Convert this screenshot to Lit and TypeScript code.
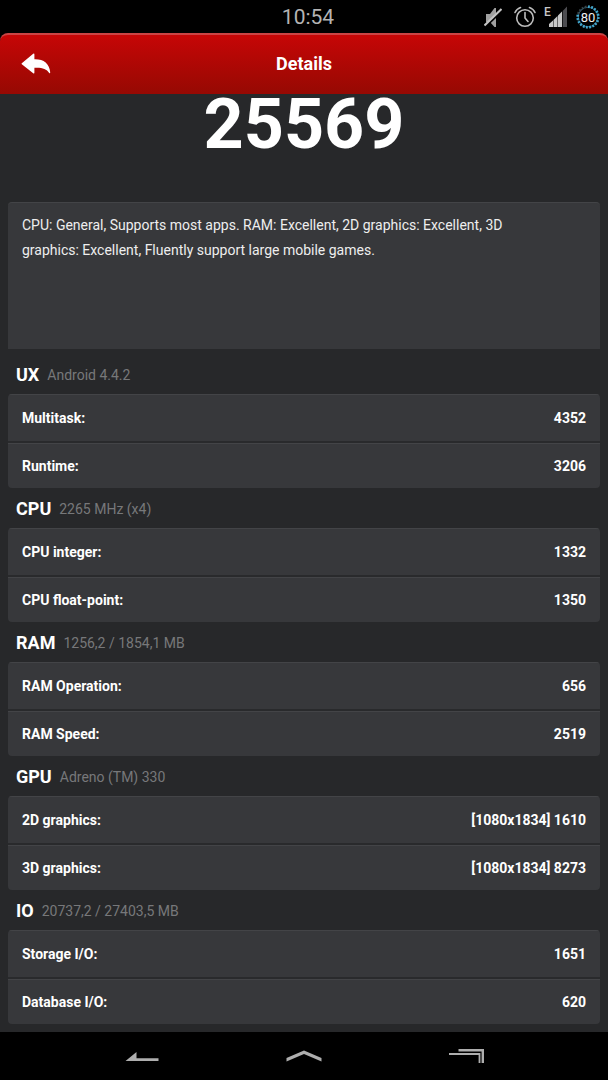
import { LitElement, html, css, svg } from "lit";
import { customElement, property } from "lit/decorators.js";

interface Row {
  label: string;
  value: string;
}

interface Group {
  name: string;
  info: string;
  rows: Row[];
}

const GROUPS: Group[] = [
  {
    name: "UX",
    info: "Android 4.4.2",
    rows: [
      { label: "Multitask:", value: "4352" },
      { label: "Runtime:", value: "3206" },
    ],
  },
  {
    name: "CPU",
    info: "2265 MHz (x4)",
    rows: [
      { label: "CPU integer:", value: "1332" },
      { label: "CPU float-point:", value: "1350" },
    ],
  },
  {
    name: "RAM",
    info: "1256,2 / 1854,1 MB",
    rows: [
      { label: "RAM Operation:", value: "656" },
      { label: "RAM Speed:", value: "2519" },
    ],
  },
  {
    name: "GPU",
    info: "Adreno (TM) 330",
    rows: [
      { label: "2D graphics:", value: "[1080x1834] 1610" },
      { label: "3D graphics:", value: "[1080x1834] 8273" },
    ],
  },
  {
    name: "IO",
    info: "20737,2 / 27403,5 MB",
    rows: [
      { label: "Storage I/O:", value: "1651" },
      { label: "Database I/O:", value: "620" },
    ],
  },
];

@customElement("status-bar")
export class StatusBar extends LitElement {
  static styles = css`
    :host {
      display: block;
      background: #000;
    }
    .bar {
      display: grid;
      grid-template-columns: 1fr auto 1fr;
      align-items: center;
      height: 33px;
      padding: 0 8px;
    }
    .time {
      grid-column: 2;
      padding: 2px 0 0 8px;
      font-size: 21px;
      line-height: 31px;
      color: #b4b4b4;
    }
    .icons {
      display: flex;
      justify-content: flex-end;
      align-items: center;
      gap: 8px;
    }
    svg {
      display: block;
    }
    .mute {
      margin-right: 4px;
    }
    .network {
      font: 500 12px Roboto, sans-serif;
      fill: #c8c8c8;
    }
    .charge {
      font: 400 13px Roboto, sans-serif;
      fill: #f0f0f0;
    }
  `;

  render() {
    return html`
      <div class="bar">
        <time class="time">10:54</time>
        <div class="icons">
          <svg class="mute" width="18" height="24" viewBox="0 0 18 24" role="img" aria-label="Muted">
            <path d="M2 9h4l4.500-6H12v19h-1.500L6 17H2z" fill="#a0a0a0" />
            <path d="M1 22L18 5.500" stroke="#000" stroke-width="2.400" />
            <path d="M.5 20.500L17.500 4" stroke="#c4c4c4" stroke-width="2" />
          </svg>
          <svg width="22" height="24" viewBox="0 0 22 24" role="img" aria-label="Alarm">
            <g fill="none" stroke="#bcbcbc" stroke-width="1.600" stroke-linecap="round">
              <circle cx="11" cy="13" r="8.300" />
              <path d="M11 7.500V13l3 3.500M1 7.500Q2.500 4 6.500 2.500M21 7.500Q19.500 4 15.500 2.500" />
            </g>
          </svg>
          <svg width="24" height="24" viewBox="0 0 24 24" role="img" aria-label="Edge network">
            <text class="network" x="0" y="11">E</text>
            <path d="M5 19L9 15.500V22H5zM9.500 15L13.500 11V22H9.500zM14 10.500L18 6.500V22H14z" fill="#c8c8c8" />
            <path d="M18.700 6L23 1.500V22H18.700z" fill="#4c4c50" />
          </svg>
          <svg width="24" height="24" viewBox="0 0 24 24" role="img" aria-label="Battery 80 percent">
            <circle cx="12" cy="12" r="9.800" fill="none" stroke="#2c6e8a" stroke-width="1" />
            <circle
              cx="12"
              cy="12"
              r="10.300"
              fill="none"
              stroke="#3a4448"
              stroke-width="2.400"
              stroke-dasharray="1.800 1.436"
              pathLength="64.720"
            />
            <path
              d="M12 1.700A10.300 10.300 0 1 1 2.200 8.820"
              fill="none"
              stroke="#3fa9d2"
              stroke-width="2.600"
              stroke-dasharray="1.800 1.436"
            />
            <text class="charge" x="12" y="16.500" text-anchor="middle">80</text>
          </svg>
        </div>
      </div>
    `;
  }
}

@customElement("title-bar")
export class TitleBar extends LitElement {
  @property() heading = "";

  static styles = css`
    :host {
      display: block;
      background: #000;
    }
    .bar {
      display: grid;
      grid-template-columns: 72px 1fr 72px;
      align-items: start;
      box-sizing: border-box;
      height: 61px;
      border-top: 2px solid #cb4444;
      border-radius: 8px 8px 0 0;
      background: linear-gradient(#c60606, #960903);
    }
    .back {
      display: flex;
      align-items: center;
      justify-content: center;
      height: 58px;
      padding: 0;
      border: 0;
      background: none;
      cursor: pointer;
    }
    .title {
      margin: 0;
      font-size: 18px;
      line-height: 58px;
      font-weight: 700;
      text-align: center;
      color: #fff;
    }
  `;

  render() {
    return html`
      <header class="bar">
        <button class="back" type="button" aria-label="Back">
          <svg width="30" height="22" viewBox="0 0 30 22">
            <path
              d="M.8 10.300L12.200.8Q13.400 0 13.400 1.500V6.300C22.500 6 28.500 10.500 29.200 19.300Q29.200 20.800 28.200 19.900C25.500 15.700 20.500 14.300 13.400 14.800V19.500Q13.400 21 12.200 20.200L.8 11.300Q.2 10.800.8 10.300z"
              fill="#fff"
            />
          </svg>
        </button>
        <h1 class="title">${this.heading}</h1>
      </header>
    `;
  }
}

@customElement("score-group")
export class ScoreGroup extends LitElement {
  @property({ attribute: false }) group!: Group;

  static styles = css`
    :host {
      display: block;
    }
    .heading {
      display: flex;
      align-items: center;
      gap: 8px;
      padding: 2px 8px 0;
      line-height: 38px;
    }
    .name {
      margin: 0;
      font-size: 18px;
      font-weight: 700;
      color: #fff;
    }
    .info {
      font-size: 14px;
      color: #77787a;
    }
    .rows {
      width: 100%;
      border-spacing: 0;
      border-radius: 4px;
      overflow: hidden;
      background: #37383b;
      font-size: 14px;
      line-height: 20px;
      color: #fff;
    }
    .label,
    .value {
      padding: 12px 14px;
      border-top: 1px solid #434447;
      font-weight: 700;
    }
    .row:first-child .label,
    .row:first-child .value {
      padding: 13px 14px;
      border-bottom: 2px solid #292a2c;
    }
    .label {
      text-align: left;
    }
    .value {
      text-align: right;
    }
  `;

  render() {
    return html`
      <section>
        <div class="heading">
          <h2 class="name">${this.group.name}</h2>
          <span class="info">${this.group.info}</span>
        </div>
        <table class="rows">
          <tbody>
            ${this.group.rows.map(
              (row) => html`
                <tr class="row">
                  <th class="label" scope="row">${row.label}</th>
                  <td class="value">${row.value}</td>
                </tr>
              `
            )}
          </tbody>
        </table>
      </section>
    `;
  }
}

@customElement("nav-bar")
export class NavBar extends LitElement {
  static styles = css`
    :host {
      display: block;
      background: #000;
    }
    .bar {
      display: grid;
      grid-template-columns: repeat(3, 162px);
      justify-content: center;
      height: 48px;
    }
    .key {
      display: flex;
      align-items: center;
      justify-content: center;
      padding: 0;
      border: 0;
      background: none;
      cursor: pointer;
    }
  `;

  private key(label: string, shape: unknown) {
    return html`
      <button class="key" type="button" aria-label=${label}>
        <svg width="36" height="16" viewBox="0 0 36 16">${shape}</svg>
      </button>
    `;
  }

  render() {
    return html`
      <nav class="bar">
        ${this.key("Back", svg`<path d="M1.500 13L12.500 4V10.200H34.500V13z" fill="#aeaeae" />`)}
        ${this.key("Home", svg`<path d="M.5 10L18 2.500L35.500 10V13.500L18 6L.5 13.500z" fill="#aeaeae" />`)}
        ${this.key(
          "Recent apps",
          svg`<path d="M10.500 2.200H34.800V15" fill="none" stroke="#aeaeae" stroke-width="2.400" />
            <path d="M1 6H31.500V15" fill="none" stroke="#aeaeae" stroke-width="1.800" />`
        )}
      </nav>
    `;
  }
}

@customElement("app-root")
export class AppRoot extends LitElement {
  static styles = css`
    :host {
      display: flex;
      flex-direction: column;
      min-height: 100vh;
      background: #27282a;
      font-family: Roboto, sans-serif;
    }
    .content {
      flex: 1;
      padding: 0 8px 8px;
    }
    .score {
      margin: 0;
      height: 108px;
      font-size: 70px;
      line-height: 60px;
      font-weight: 700;
      text-align: center;
      color: #fff;
    }
    .summary {
      box-sizing: border-box;
      min-height: 147px;
      margin: 0 0 5px;
      padding: 10px 90px 10px 14px;
      border-top: 1px solid #434447;
      border-radius: 4px 4px 0 0;
      background: #37383b;
      font-size: 14px;
      line-height: 25px;
      color: #eee;
    }
  `;

  render() {
    return html`
      <status-bar></status-bar>
      <title-bar heading="Details"></title-bar>
      <main class="content">
        <p class="score">25569</p>
        <p class="summary">
          CPU: General, Supports most apps. RAM: Excellent, 2D graphics: Excellent, 3D graphics:
          Excellent, Fluently support large mobile games.
        </p>
        ${GROUPS.map((group) => html`<score-group .group=${group}></score-group>`)}
      </main>
      <nav-bar></nav-bar>
    `;
  }
}
